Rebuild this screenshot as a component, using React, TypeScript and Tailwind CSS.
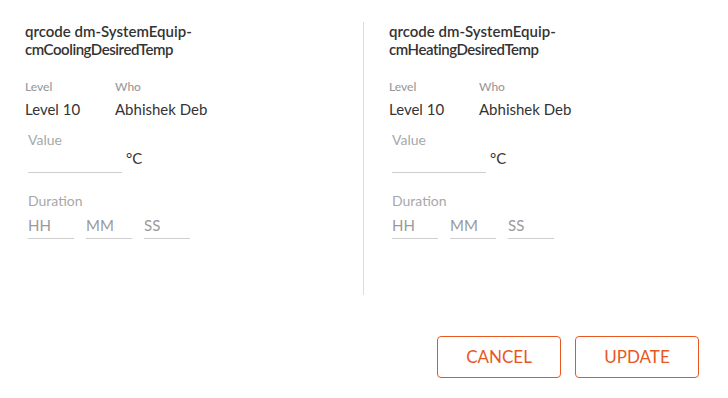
import React from "react";

function Column({ title1, title2, withDivider }: { title1: string; title2: string; withDivider?: boolean }) {
  return (
    <div className={`flex flex-col pl-[25px] ${withDivider ? "w-[364px] border-r border-[#dcdcdc]" : "flex-1"}`}>
      <div className="text-[15px] font-semibold leading-[18px] text-[#333]">
        <div>{title1}</div>
        <div className="tracking-[-0.45px]">{title2}</div>
      </div>
      <div className="mt-[21px] flex">
        <div className="w-[90px]">
          <div className="text-[12px] font-medium leading-[16px] text-[#9a9a9a]">Level</div>
          <div className="mt-[4px] text-[15px] leading-[20px] text-[#333]">Level 10</div>
        </div>
        <div>
          <div className="text-[12px] font-medium leading-[16px] text-[#9a9a9a]">Who</div>
          <div className="mt-[4px] text-[15px] leading-[20px] text-[#333]">Abhishek Deb</div>
        </div>
      </div>
      <div className="pl-[3px]">
        <div className="mt-[12px] text-[14px] leading-[18px] text-[#a8a8a8]">Value</div>
        <div className="flex items-start">
          <input className="h-[24px] w-[94px] border-b border-[#cfcfcf] bg-transparent outline-none" />
          <span className="-mt-[1px] ml-[4px] text-[15px] leading-[20px] text-[#333]">°C</span>
        </div>
        <div className="mt-[19px] text-[14px] leading-[18px] text-[#a8a8a8]">Duration</div>
        <div className="flex gap-[12px]">
          {["HH", "MM", "SS"].map((p) => (
            <input
              key={p}
              placeholder={p}
              className="h-[29px] w-[46px] border-b border-[#cfcfcf] bg-transparent pt-[1px] text-[15px] leading-[20px] text-[#333] outline-none placeholder:text-[#9a9a9a]"
            />
          ))}
        </div>
      </div>
    </div>
  );
}

export default function App() {
  return (
    <div className="flex h-[398px] w-[728px] flex-col bg-white" style={{ fontFamily: "Lato, 'Open Sans', sans-serif" }}>
      <div className="mt-[22px] flex h-[273px]">
        <Column title1="qrcode dm-SystemEquip-" title2="cmCoolingDesiredTemp" withDivider />
        <Column title1="qrcode dm-SystemEquip-" title2="cmHeatingDesiredTemp" />
      </div>
      <div className="mt-[41px] flex justify-end gap-[14px] pr-[29px]">
        <button className="h-[42px] w-[124px] rounded-[4px] border border-[#e8571f] text-[17px] text-[#e8571f]">CANCEL</button>
        <button className="h-[42px] w-[124px] rounded-[4px] border border-[#e8571f] text-[17px] text-[#e8571f]">UPDATE</button>
      </div>
    </div>
  );
}
